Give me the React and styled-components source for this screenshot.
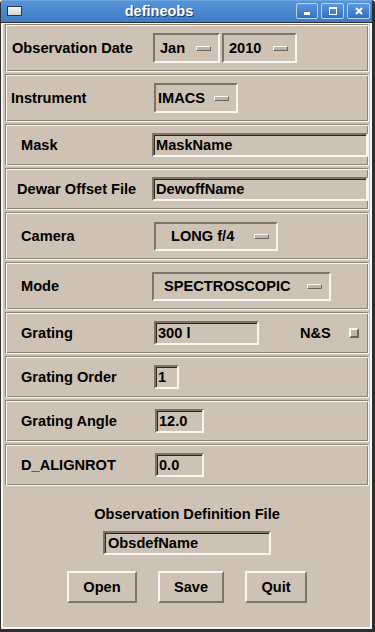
import styled, { createGlobalStyle } from "styled-components";

const GlobalStyle = createGlobalStyle`
  html, body {
    margin: 0;
    padding: 0;
    background: #ffffff;
  }
  body {
    font-family: "Liberation Sans", Helvetica, Arial, sans-serif;
  }
`;

const DARK = "#7b746b";
const LIGHT = "#f8f6f2";
const BEIGE = "#cdc2b4";

const Window = styled.div`
  width: 375px;
  height: 632px;
  box-sizing: border-box;
  display: flex;
  flex-direction: column;
  border-left: 1px solid #2e2e2e;
  border-right: 3px solid #2e2e2e;
  border-bottom: 3px solid #2e2e2e;
  border-top-left-radius: 4px;
  border-top-right-radius: 4px;
  overflow: hidden;
  background: ${BEIGE};
`;

const TitleBar = styled.div`
  height: 22px;
  flex-shrink: 0;
  display: flex;
  align-items: center;
  border-bottom: 1px solid #2e2e2e;
  background: linear-gradient(#8ab9ec 0, #5693d8 1px, #4a88d0 50%, #3d7bc6 100%);
`;

const WinIcon = styled.div`
  width: 15px;
  height: 10px;
  box-sizing: border-box;
  margin-left: 6px;
  border: 1px solid #27384d;
  background: linear-gradient(#f6f6f6, #d2d2d2);
`;

const Title = styled.div`
  flex: 1;
  text-align: center;
  color: #ffffff;
  font-size: 14.5px;
  font-weight: bold;
  text-shadow: 1px 1px 0 #1f3b66;
`;

const TitleButtons = styled.div`
  display: flex;
  gap: 3px;
  margin-right: 2px;
`;

const TitleButton = styled.div`
  width: ${(p) => p.$w}px;
  height: 16px;
  box-sizing: border-box;
  border: 1px solid #b4d2f2;
  border-radius: 2px;
  background: linear-gradient(#5b97db, #3370bd);
  display: flex;
  align-items: center;
  justify-content: center;
`;

const Body = styled.div`
  flex: 1;
  display: flex;
  flex-direction: column;
  gap: 2px;
  border-style: solid;
  border-color: ${LIGHT};
  border-width: 1px 2px 2px 2px;
  padding: 0 1px 0 2px;
  font-size: 14.6px;
  font-weight: bold;
  color: #000;
`;

const Section = styled.div`
  height: ${(p) => p.$h}px;
  flex-shrink: 0;
  box-sizing: border-box;
  display: flex;
  align-items: center;
  padding-left: ${(p) => p.$indent}px;
  border: 1px solid;
  border-color: #8b8479 ${LIGHT} ${LIGHT} #8b8479;
  box-shadow: inset 1px 1px 0 ${LIGHT}, inset -1px -1px 0 #8b8479;
`;

const Label = styled.div`
  width: ${(p) => p.$w}px;
  flex-shrink: 0;
  white-space: nowrap;
`;

const MenuButton = styled.div`
  width: ${(p) => p.$w}px;
  height: ${(p) => p.$h || 30}px;
  box-sizing: border-box;
  display: flex;
  align-items: center;
  padding: 0 7px 0 ${(p) => p.$pl}px;
  margin-right: 2px;
  border: 2px solid;
  border-color: ${DARK} ${LIGHT} ${LIGHT} ${DARK};
  white-space: nowrap;
`;

const Indicator = styled.div`
  margin-left: auto;
  width: 15px;
  height: 5px;
  flex-shrink: 0;
  box-sizing: border-box;
  border: 1px solid;
  border-color: #fbfaf7 #6b645c #6b645c #fbfaf7;
  background: #bdb4a9;
`;

const Entry = styled.div`
  width: ${(p) => p.$w}px;
  height: 24px;
  flex-shrink: 0;
  box-sizing: border-box;
  display: flex;
  align-items: center;
  padding-left: 2px;
  border: 2px solid;
  border-color: ${DARK} ${LIGHT} ${LIGHT} ${DARK};
  box-shadow: inset 1px 1px 0 #2b2724;
  white-space: nowrap;
  overflow: hidden;
`;

const CheckLabel = styled.div`
  margin-left: 41px;
`;

const CheckBox = styled.div`
  width: 10px;
  height: 10px;
  margin-left: 18px;
  box-sizing: border-box;
  border: 2px solid;
  border-color: #fbfaf7 #6b645c #6b645c #fbfaf7;
  background: #bdb4a9;
`;

const BottomPane = styled.div`
  flex: 1;
  display: flex;
  flex-direction: column;
  align-items: center;
  padding-top: 18px;
`;

const Caption = styled.div`
  line-height: 16px;
`;

const FileEntry = styled(Entry)`
  margin-top: 9px;
  padding-left: 3px;
`;

const ButtonRow = styled.div`
  display: flex;
  gap: 21px;
  margin-top: 16px;
`;

const Button = styled.div`
  width: ${(p) => p.$w}px;
  height: 32px;
  box-sizing: border-box;
  display: flex;
  align-items: center;
  justify-content: center;
  border: 2px solid;
  border-color: ${LIGHT} ${DARK} ${DARK} ${LIGHT};
`;

const rows = [
  { label: "Mask", h: 42, indent: 15, w: 131, entry: "MaskName", ew: 216 },
  { label: "Dewar Offset File", h: 42, indent: 11, w: 135, entry: "DewoffName", ew: 216 },
];

const smallRows = [
  { label: "Grating Order", indent: 15, w: 133, entry: "1", ew: 25 },
  { label: "Grating Angle", indent: 15, w: 134, entry: "12.0", ew: 49 },
  { label: "D_ALIGNROT", indent: 15, w: 134, entry: "0.0", ew: 49 },
];

export default function App() {
  return (
    <>
      <GlobalStyle />
      <Window>
        <TitleBar>
          <WinIcon />
          <Title>defineobs</Title>
          <TitleButtons>
            <TitleButton $w={22}>
              <svg width="8" height="8" viewBox="0 0 8 8">
                <rect x="1" y="5" width="6" height="3" fill="#fff" />
              </svg>
            </TitleButton>
            <TitleButton $w={23}>
              <svg width="8" height="8" viewBox="0 0 8 8">
                <rect x="0.5" y="0.5" width="7" height="7" fill="none" stroke="#fff" />
                <rect x="0" y="0" width="8" height="2" fill="#fff" />
              </svg>
            </TitleButton>
            <TitleButton $w={23}>
              <svg width="8" height="8" viewBox="0 0 8 8">
                <path d="M1 1 L7 7 M7 1 L1 7" stroke="#fff" strokeWidth="2" />
              </svg>
            </TitleButton>
          </TitleButtons>
        </TitleBar>

        <Body>
          <Section $h={48} $indent={6}>
            <Label $w={141}>Observation Date</Label>
            <MenuButton $w={67} $pl={5}>
              Jan
              <Indicator />
            </MenuButton>
            <MenuButton $w={75} $pl={5}>
              2010
              <Indicator />
            </MenuButton>
          </Section>

          <Section $h={48} $indent={5}>
            <Label $w={143}>Instrument</Label>
            <MenuButton $w={84} $pl={2}>
              IMACS
              <Indicator />
            </MenuButton>
          </Section>

          {rows.map((r) => (
            <Section key={r.label} $h={r.h} $indent={r.indent}>
              <Label $w={r.w}>{r.label}</Label>
              <Entry $w={r.ew}>{r.entry}</Entry>
            </Section>
          ))}

          <Section $h={48} $indent={15}>
            <Label $w={133}>Camera</Label>
            <MenuButton $w={124} $h={29} $pl={15}>
              LONG f/4
              <Indicator />
            </MenuButton>
          </Section>

          <Section $h={48} $indent={15}>
            <Label $w={131}>Mode</Label>
            <MenuButton $w={179} $h={29} $pl={10}>
              SPECTROSCOPIC
              <Indicator />
            </MenuButton>
          </Section>

          <Section $h={42} $indent={15}>
            <Label $w={133}>Grating</Label>
            <Entry $w={105}>300 l</Entry>
            <CheckLabel>N&amp;S</CheckLabel>
            <CheckBox />
          </Section>

          {smallRows.map((r) => (
            <Section key={r.label} $h={42} $indent={r.indent}>
              <Label $w={r.w}>{r.label}</Label>
              <Entry $w={r.ew}>{r.entry}</Entry>
            </Section>
          ))}

          <BottomPane>
            <Caption>Observation Definition File</Caption>
            <FileEntry $w={168}>ObsdefName</FileEntry>
            <ButtonRow>
              <Button $w={70}>Open</Button>
              <Button $w={66}>Save</Button>
              <Button $w={62}>Quit</Button>
            </ButtonRow>
          </BottomPane>
        </Body>
      </Window>
    </>
  );
}
